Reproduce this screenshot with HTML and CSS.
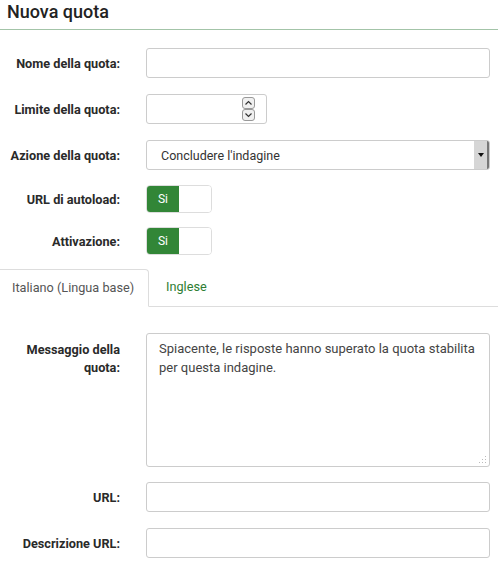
FILE: index.html
```html
<!DOCTYPE html>
<html lang="it">

<head>
  <meta charset="UTF-8">
  <meta name="viewport" content="width=device-width, initial-scale=1.0">
  <title>Nuova quota</title>
  <link rel="stylesheet" href="styles.css">
</head>

<body>
  <div class="header">
    <h1>Nuova quota</h1>
  </div>

  <form class="form">
    <div class="row">
      <label class="label">Nome della quota:</label>
      <div class="field"><div class="input"></div></div>
    </div>

    <div class="row">
      <label class="label">Limite della quota:</label>
      <div class="field">
        <div class="input number">
          <div class="spinner">
            <span class="spin">
              <svg width="9" height="6" viewBox="0 0 9 6"><path d="M1.5 4.5 L4.5 1.5 L7.5 4.5" fill="none" stroke="#333" stroke-width="1.2"/></svg>
            </span>
            <span class="spin">
              <svg width="9" height="6" viewBox="0 0 9 6"><path d="M1.5 1.5 L4.5 4.5 L7.5 1.5" fill="none" stroke="#333" stroke-width="1.2"/></svg>
            </span>
          </div>
        </div>
      </div>
    </div>

    <div class="row">
      <label class="label">Azione della quota:</label>
      <div class="field">
        <div class="input select">
          <span class="select-text">Concludere l'indagine</span>
          <span class="select-arrow">
            <svg width="6" height="4" viewBox="0 0 6 4"><path d="M0 0 H6 L3 4 Z" fill="#111"/></svg>
          </span>
        </div>
      </div>
    </div>

    <div class="row row-toggle">
      <label class="label">URL di autoload:</label>
      <div class="field">
        <div class="toggle"><span class="toggle-on">Si</span><span class="toggle-off"></span></div>
      </div>
    </div>

    <div class="row row-toggle last">
      <label class="label">Attivazione:</label>
      <div class="field">
        <div class="toggle"><span class="toggle-on">Si</span><span class="toggle-off"></span></div>
      </div>
    </div>

    <div class="tabs">
      <div class="tab active">Italiano (Lingua base)</div>
      <div class="tab">Inglese</div>
      <div class="tab-fill"></div>
    </div>

    <div class="tab-body">
      <div class="row row-area">
        <label class="label">Messaggio della quota:</label>
        <div class="field">
          <div class="textarea">Spiacente, le risposte hanno superato la quota stabilita per questa indagine.
            <svg class="grip" width="8" height="8" viewBox="0 0 8 8">
              <rect x="6" y="0" width="1" height="1" fill="#bbb"/>
              <rect x="6" y="3" width="1" height="1" fill="#bbb"/>
              <rect x="3" y="3" width="1" height="1" fill="#bbb"/>
              <rect x="6" y="6" width="1" height="1" fill="#bbb"/>
              <rect x="3" y="6" width="1" height="1" fill="#bbb"/>
              <rect x="0" y="6" width="1" height="1" fill="#bbb"/>
            </svg>
          </div>
        </div>
      </div>

      <div class="row">
        <label class="label">URL:</label>
        <div class="field"><div class="input"></div></div>
      </div>

      <div class="row">
        <label class="label">Descrizione URL:</label>
        <div class="field"><div class="input"></div></div>
      </div>
    </div>
  </form>
</body>

</html>
```

FILE: styles.css
```css
body {
  margin: 0;
  font-family: Roboto, "Liberation Sans", sans-serif;
  color: #333;
  background: #fff;
}

.header {
  height: 29px;
  border-bottom: 1px solid #a3c4a8;
  padding-left: 7px;
}

.header h1 {
  margin: 0;
  padding-top: 1px;
  font-size: 18px;
  font-weight: 500;
  line-height: 22px;
  color: #222;
}

.form {
  padding-top: 18px;
}

.row {
  display: grid;
  grid-template-columns: 120px 1fr;
  column-gap: 26px;
  align-items: center;
  padding-right: 8px;
  margin-bottom: 16px;
}

.row-toggle {
  margin-top: -1px;
  margin-bottom: 15px;
}

.row-toggle.last {
  margin-bottom: 14px;
}

.label {
  text-align: right;
  font-size: 12.7px;
  font-weight: 700;
  color: #2a2a2a;
  line-height: 18px;
  padding-top: 1px;
}

.input {
  box-sizing: border-box;
  height: 30px;
  border: 1px solid #ccc;
  border-radius: 3px;
  background: #fff;
}

.number {
  width: 121px;
  display: flex;
  justify-content: flex-end;
  align-items: center;
  padding-right: 11px;
}

.spinner {
  display: flex;
  flex-direction: column;
}

.spin {
  box-sizing: border-box;
  width: 13px;
  height: 12px;
  border: 1px solid #999;
  border-radius: 3px;
  background: #f0f0f0;
  display: flex;
  align-items: center;
  justify-content: center;
}

.select {
  display: flex;
  align-items: center;
  overflow: hidden;
}

.select-text {
  flex: 1;
  padding-left: 14px;
  font-size: 12.5px;
  color: #333;
}

.select-arrow {
  width: 13px;
  height: 100%;
  background: #d6d6d6;
  border-right: 2px solid #777;
  display: flex;
  align-items: center;
  justify-content: center;
}

.toggle {
  box-sizing: border-box;
  width: 66px;
  height: 28px;
  border: 1px solid #ddd;
  border-radius: 4px;
  display: flex;
  overflow: hidden;
}

.toggle-on {
  width: 32px;
  background: #328637;
  color: #fff;
  font-size: 12px;
  line-height: 26px;
  text-align: center;
}

.toggle-off {
  flex: 1;
  background: #fff;
}

.tabs {
  display: flex;
  height: 38px;
}

.tab {
  box-sizing: border-box;
  font-size: 12.7px;
  line-height: 36px;
  color: #2e7d32;
  padding: 0 17px;
  border-bottom: 1px solid #ddd;
}

.tab.active {
  width: 149px;
  padding: 0 0 0 12px;
  color: #555;
  border: 1px solid #ddd;
  border-left: 0;
  border-bottom-color: transparent;
  border-top-right-radius: 4px;
}

.tab-fill {
  flex: 1;
  border-bottom: 1px solid #ddd;
}

.tab-body {
  padding-top: 26px;
}

.row-area {
  align-items: start;
  margin-bottom: 15px;
}

.row-area .label {
  padding-top: 8px;
}

.textarea {
  position: relative;
  box-sizing: border-box;
  height: 134px;
  border: 1px solid #ccc;
  border-radius: 3px;
  padding: 5px 6px 5px 12px;
  font-size: 13px;
  line-height: 19px;
  color: #444;
}

.grip {
  position: absolute;
  right: 2px;
  bottom: 2px;
}
```
